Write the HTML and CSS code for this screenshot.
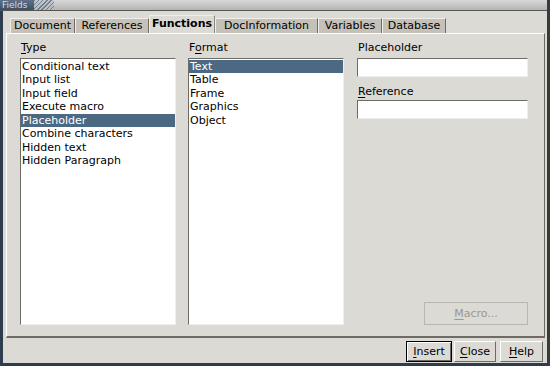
FILE: index.html
```html
<!DOCTYPE html>
<html lang="en">
<head>
  <meta charset="UTF-8" />
  <title>Fields</title>
  <link rel="stylesheet" href="styles.css">
</head>
<body>

  <div class="window">
    <!-- TITLE BAR -->
    <div class="titlebar">
      <span class="title">Fields</span>
      <span class="grip"></span>
    </div>

    <div class="dialog">
      <!-- TABS -->
      <div class="tabs">
        <div class="tab tab-document">Document</div>
        <div class="tab tab-references">References</div>
        <div class="tab tab-functions active">Functions</div>
        <div class="tab tab-docinfo">DocInformation</div>
        <div class="tab tab-variables">Variables</div>
        <div class="tab tab-database">Database</div>
      </div>

      <!-- TAB PAGE -->
      <div class="page">
        <div class="col">
          <div class="label"><u>T</u>ype</div>
          <div class="list">
            <div class="item">Conditional text</div>
            <div class="item">Input list</div>
            <div class="item">Input field</div>
            <div class="item">Execute macro</div>
            <div class="item selected">Placeholder</div>
            <div class="item">Combine characters</div>
            <div class="item">Hidden text</div>
            <div class="item">Hidden Paragraph</div>
          </div>
        </div>

        <div class="col">
          <div class="label">F<u>o</u>rmat</div>
          <div class="list">
            <div class="item selected">Text</div>
            <div class="item">Table</div>
            <div class="item">Frame</div>
            <div class="item">Graphics</div>
            <div class="item">Object</div>
          </div>
        </div>

        <div class="col side">
          <div class="label">Placeholder</div>
          <div class="field"></div>
          <div class="label second"><u>R</u>eference</div>
          <div class="field"></div>
          <div class="spacer"></div>
          <div class="macro"><u>M</u>acro...</div>
        </div>
      </div>

      <!-- BUTTONS -->
      <div class="buttons">
        <div class="btn btn-insert default"><u>I</u>nsert</div>
        <div class="btn btn-close"><u>C</u>lose</div>
        <div class="btn btn-help"><u>H</u>elp</div>
      </div>
    </div>
  </div>

</body>
</html>
```

FILE: styles.css
```css
* {
  box-sizing: border-box;
}

body {
  margin: 0;
  font-family: 'DejaVu Sans', sans-serif;
  font-size: 11px;
  color: #000;
}

u {
  text-decoration: underline;
  text-underline-offset: 2px;
}

.window {
  width: 550px;
  height: 366px;
  background: #dcdad5;
  border-left: 3px solid #2e3d4d;
  border-right: 3px solid #3a3a3a;
  border-bottom: 3px solid #2e3d4d;
  display: flex;
  flex-direction: column;
}

.titlebar {
  height: 11px;
  display: flex;
  background: linear-gradient(#d8d8d8, #b4b4b4);
  border-bottom: 1px solid #555;
  margin-left: -3px;
}

.title {
  width: 34px;
  background: linear-gradient(#5d7188, #3c4f64);
  color: #d4dbe3;
  font-size: 9px;
  line-height: 10px;
  padding-left: 2px;
}

.grip {
  width: 20px;
  background: repeating-linear-gradient(135deg, #4a5d72 0 1px, #b9bec4 1px 3px);
  opacity: 0.7;
}

.dialog {
  flex: 1;
  padding: 4px 2px 0 3px;
  display: flex;
  flex-direction: column;
}

.tabs {
  display: flex;
  align-items: flex-end;
  height: 18px;
  padding-left: 4px;
}

.tab {
  height: 15px;
  line-height: 14px;
  text-align: center;
  white-space: nowrap;
  background: #c5c1b8;
  border-top: 1px solid #eeeeec;
  border-left: 1px solid #eeeeec;
  border-right: 1px solid #6e6b66;
}

.tab-document { width: 65px; }
.tab-references { width: 74px; }
.tab-functions { width: 66px; }
.tab-docinfo { width: 103px; }
.tab-variables { width: 64px; }
.tab-database { width: 64px; }

.tab.active {
  height: 19px;
  line-height: 16px;
  margin-bottom: -1px;
  background: #dcdad5;
  font-weight: bold;
  border-right: 1px solid #8a8782;
}

.page {
  height: 305px;
  border-top: 1px solid #fff;
  border-left: 1px solid #fff;
  border-right: 1px solid #6e6b66;
  border-bottom: 2px solid #6e6b66;
  padding: 7px 14px 11px 13px;
  display: grid;
  grid-template-columns: 156px 156px 172px;
  column-gap: 12px;
}

.col {
  display: flex;
  flex-direction: column;
}

.col.side {
  margin-left: 1px;
}

.label {
  height: 17px;
  line-height: 13px;
  padding-left: 1px;
}

.label.second {
  margin-top: 8px;
  height: 15px;
}

.list {
  flex: 1;
  background: #fff;
  border-top: 1px solid #6e6b66;
  border-left: 1px solid #6e6b66;
  border-right: 1px solid #eeeeec;
  border-bottom: 1px solid #eeeeec;
  padding-top: 1px;
}

.item {
  height: 13.45px;
  line-height: 13px;
  padding-left: 1px;
  white-space: nowrap;
}

.item.selected {
  background: #4b6983;
  color: #fff;
}

.field {
  height: 19px;
  background: #fff;
  border-top: 1px solid #6e6b66;
  border-left: 1px solid #6e6b66;
  border-right: 1px solid #eeeeec;
  border-bottom: 1px solid #eeeeec;
}

.spacer {
  flex: 1;
}

.macro {
  align-self: flex-end;
  width: 104px;
  height: 23px;
  line-height: 21px;
  text-align: center;
  color: #9a9893;
  border: 1px solid #bab7b1;
}

.buttons {
  display: flex;
  justify-content: flex-end;
  padding-top: 3px;
  padding-right: 2px;
}

.btn {
  height: 21px;
  line-height: 19px;
  text-align: center;
  border-top: 1px solid #fff;
  border-left: 1px solid #fff;
  border-right: 1px solid #6e6b66;
  border-bottom: 1px solid #6e6b66;
}

.btn-insert { width: 46px; }
.btn-close { width: 42px; margin-left: 2px; }
.btn-help { width: 43px; margin-left: 4px; }

.btn.default {
  border: 1px solid #000;
  box-shadow: inset 1px 1px 0 #fff, inset -1px -1px 0 #6e6b66;
}
```
